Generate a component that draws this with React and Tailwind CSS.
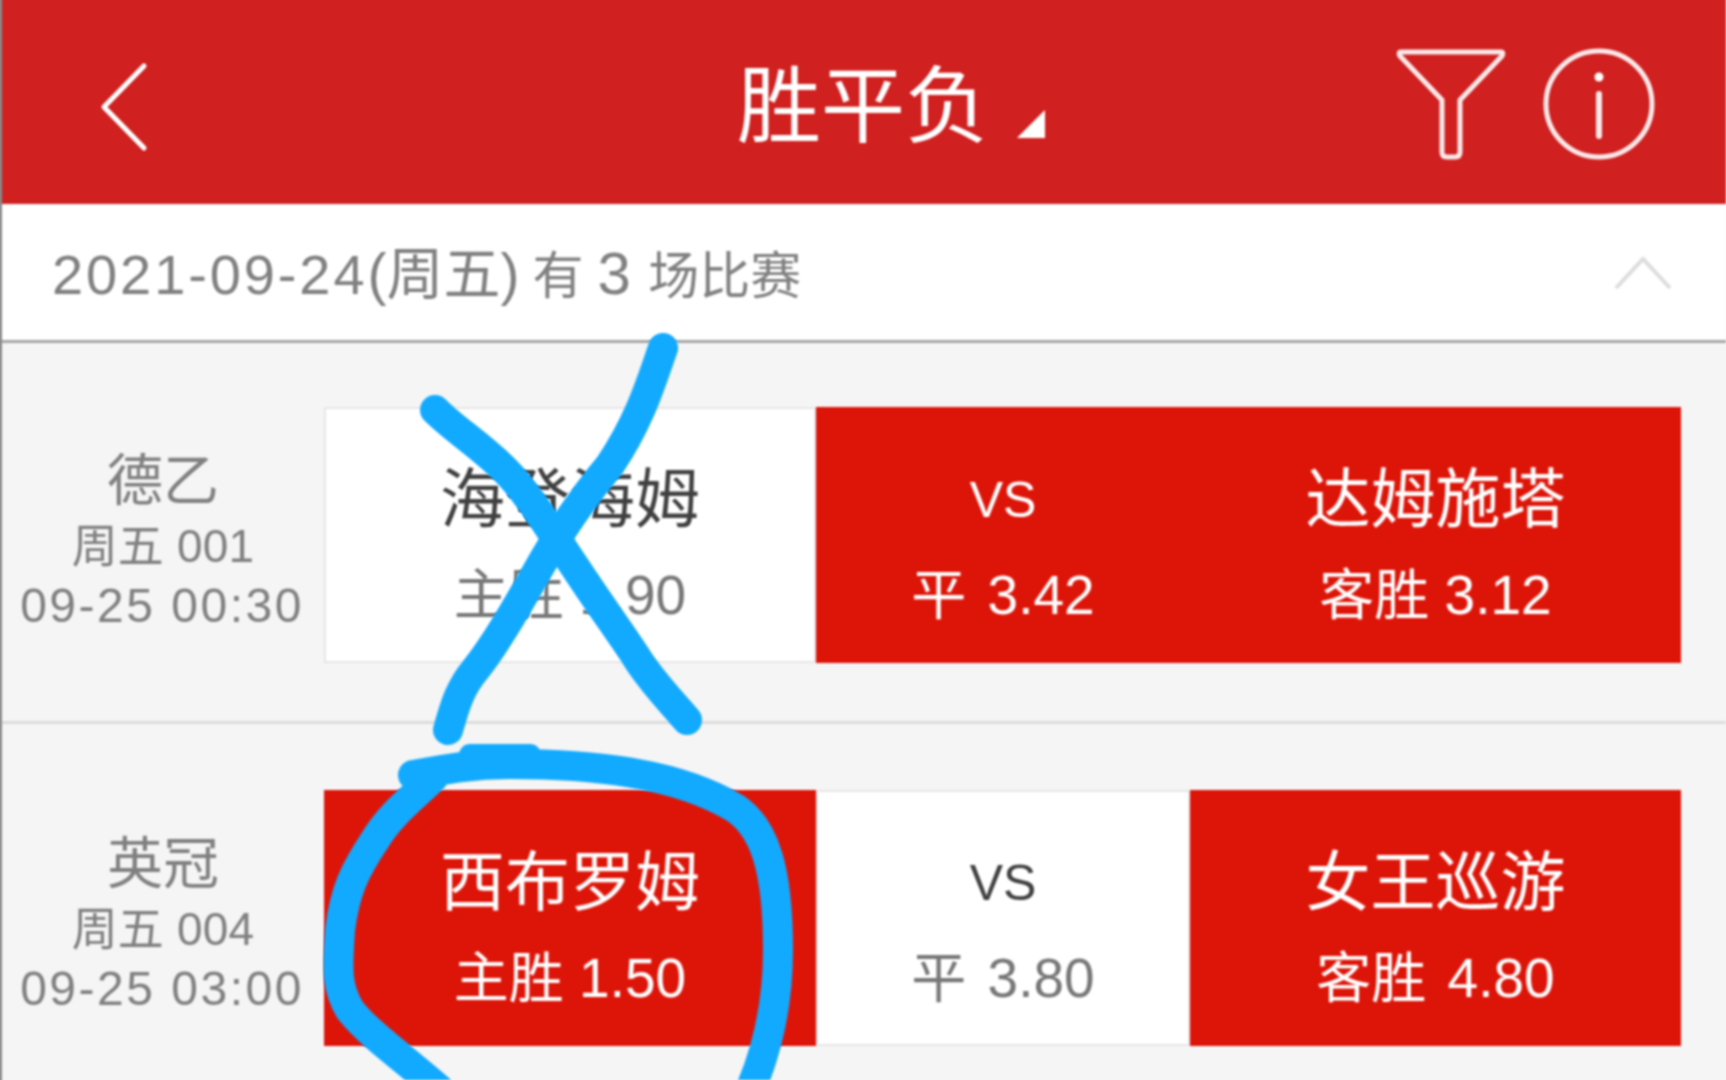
import React from 'react';

const font = { fontFamily: '"Liberation Sans", "Noto Sans CJK SC", sans-serif' };

const matches = [
  {
    league: '德乙',
    code: '周五 001',
    time: '09-25 00:30',
    cells: [
      { name: '海登海姆', odds: '主胜 1.90', on: false, w: 'w-[492px]' },
      { name: 'VS', odds: '平 3.42', on: true, wide: true, w: 'w-[374px]' },
      { name: '达姆施塔', odds: '客胜 3.12', on: true, w: 'w-[491px]' },
    ],
  },
  {
    league: '英冠',
    code: '周五 004',
    time: '09-25 03:00',
    cells: [
      { name: '西布罗姆', odds: '主胜 1.50', on: true, w: 'w-[492px]' },
      { name: 'VS', odds: '平 3.80', on: false, wide: true, w: 'w-[374px]' },
      { name: '女王巡游', odds: '客胜 4.80', on: true, wide: true, w: 'w-[491px]' },
    ],
  },
];

function Cell({ name, odds, on, wide, w }) {
  return (
    <div className={`${w} flex flex-col items-center border-[2px] ${on ? 'bg-[#dd1509] border-[#dd1509] text-white' : 'bg-white border-[#e6e6e6] text-[#404040]'}`}>
      <div className={`leading-[76px] mt-[53px] ${name === 'VS' ? 'text-[50px]' : 'text-[65px]'}`}>{name}</div>
      <div className={`text-[55px] leading-[64px] mt-[25px] ${wide ? '[word-spacing:6px]' : ''} ${on ? 'text-white' : 'text-[#777]'}`}>{odds}</div>
    </div>
  );
}

function MatchRow({ match, first }) {
  return (
    <div className={`flex ${first ? 'h-[381px] pt-[64px] border-b-[3px] border-[#dcdcdc]' : 'pt-[66px]'}`}>
      <div className="w-[322px] shrink-0 flex flex-col items-center text-[#808080]">
        <div className="text-[56px] leading-[60px] mt-[44px]">{match.league}</div>
        <div className="text-[46px] leading-[60px] mt-[5px] tracking-[0.2px]">{match.code}</div>
        <div className="text-[48px] leading-[60px] tracking-[2.5px] whitespace-nowrap -ml-[2px]">{match.time}</div>
      </div>
      <div className="flex h-[256px]">
        {match.cells.map((c, i) => (
          <Cell key={i} {...c} />
        ))}
      </div>
    </div>
  );
}

export default function App() {
  return (
    <div className="relative w-[1726px] h-[1080px] overflow-hidden bg-[#f5f5f5]" style={font}>
      {/* slightly oversized so the soft blur doesn't fade at the page edges */}
      <div className="relative w-[1734px] h-[1096px] -ml-[4px] -mt-[4px] pr-[4px] bg-[#f5f5f5] border-l-[6px] border-[#8a8a8a] blur-[0.8px]">
        {/* header */}
        <div className="h-[208px] pt-[4px] bg-[#d02020] flex items-center pl-[98px] text-white">
          <svg className="mt-[10px]" width="50" height="90" viewBox="0 0 50 90" fill="none" stroke="white" strokeWidth="5" strokeLinecap="round" strokeLinejoin="round">
            <path d="M44 4 L4 45 L44 86" />
          </svg>
          <div className="ml-[587px] mt-[10px] text-[84px] leading-none whitespace-nowrap">胜平负</div>
          <svg className="ml-[28px] mt-[44px]" width="28" height="28" viewBox="0 0 28 28" fill="white">
            <path d="M28 0 V28 H0 Z" />
          </svg>
          <svg className="ml-[351px] mt-[4px]" width="110" height="112" viewBox="0 0 110 112" fill="none" stroke="white" strokeWidth="5" strokeLinejoin="round" strokeOpacity="0.9">
            <path d="M5 4 H105 Q108 4 106 8 L64 52 V104 Q64 109 59 109 H51 Q46 109 46 104 V52 L4 8 Q2 4 5 4 Z" />
          </svg>
          <svg className="ml-[37px] mt-[4px]" width="112" height="112" viewBox="0 0 112 112" fill="none" stroke="white" strokeOpacity="0.9">
            <circle cx="56" cy="56" r="53" strokeWidth="5" />
            <path d="M56 46 V88" strokeWidth="6" strokeLinecap="round" />
            <circle cx="56" cy="29" r="4.5" fill="white" stroke="none" />
          </svg>
        </div>

        {/* date bar */}
        <div className="h-[139px] bg-white border-b-[3px] border-[#a6a6a6] flex items-center justify-between pl-[50px] pr-[54px]">
          <div className="text-[57px] leading-none text-[#808080] whitespace-nowrap mt-[4px]">
            <span className="text-[56px] tracking-[2.9px]">2021-09-24</span>
            <span>(周五)</span>
            <span className="text-[51px] ml-[13px]">有 <span className="text-[60px]">3</span> <span className="ml-[3px]">场比赛</span></span>
          </div>
          <svg className="mt-[2px]" width="58" height="34" viewBox="0 0 58 34" fill="none" stroke="#dddddd" strokeWidth="4">
            <path d="M2 32 L29 3 L56 32" />
          </svg>
        </div>

        {matches.map((m, i) => (
          <MatchRow key={i} match={m} first={i === 0} />
        ))}
      </div>

      {/* blue marker scribbles drawn over the screenshot */}
      <svg className="absolute left-0 top-0 pointer-events-none blur-[0.8px]" width="1726" height="1080" viewBox="0 0 1726 1080" fill="none" stroke="#12aaff" strokeWidth="30" strokeLinecap="round" strokeLinejoin="round">
        <path d="M435 410 C455 430 480 445 505 470 C530 495 550 530 575 567 C600 605 615 625 635 655 C650 680 670 700 687 720" />
        <path d="M663 348 C650 385 640 420 610 465 C585 495 560 530 535 575 C515 610 495 645 475 670 C460 688 455 705 448 730" />
        <path d="M413 775 C440 770 470 764 510 764 C590 764 675 772 735 808 C765 828 778 870 778 950 C778 1000 768 1050 748 1095" />
        <path d="M433 778 C410 800 390 815 375 840 C355 870 345 890 340 930 C338 965 335 985 350 1010 C370 1035 400 1055 440 1090" />
        <path d="M470 755 H530" strokeWidth="22" />
      </svg>
    </div>
  );
}
